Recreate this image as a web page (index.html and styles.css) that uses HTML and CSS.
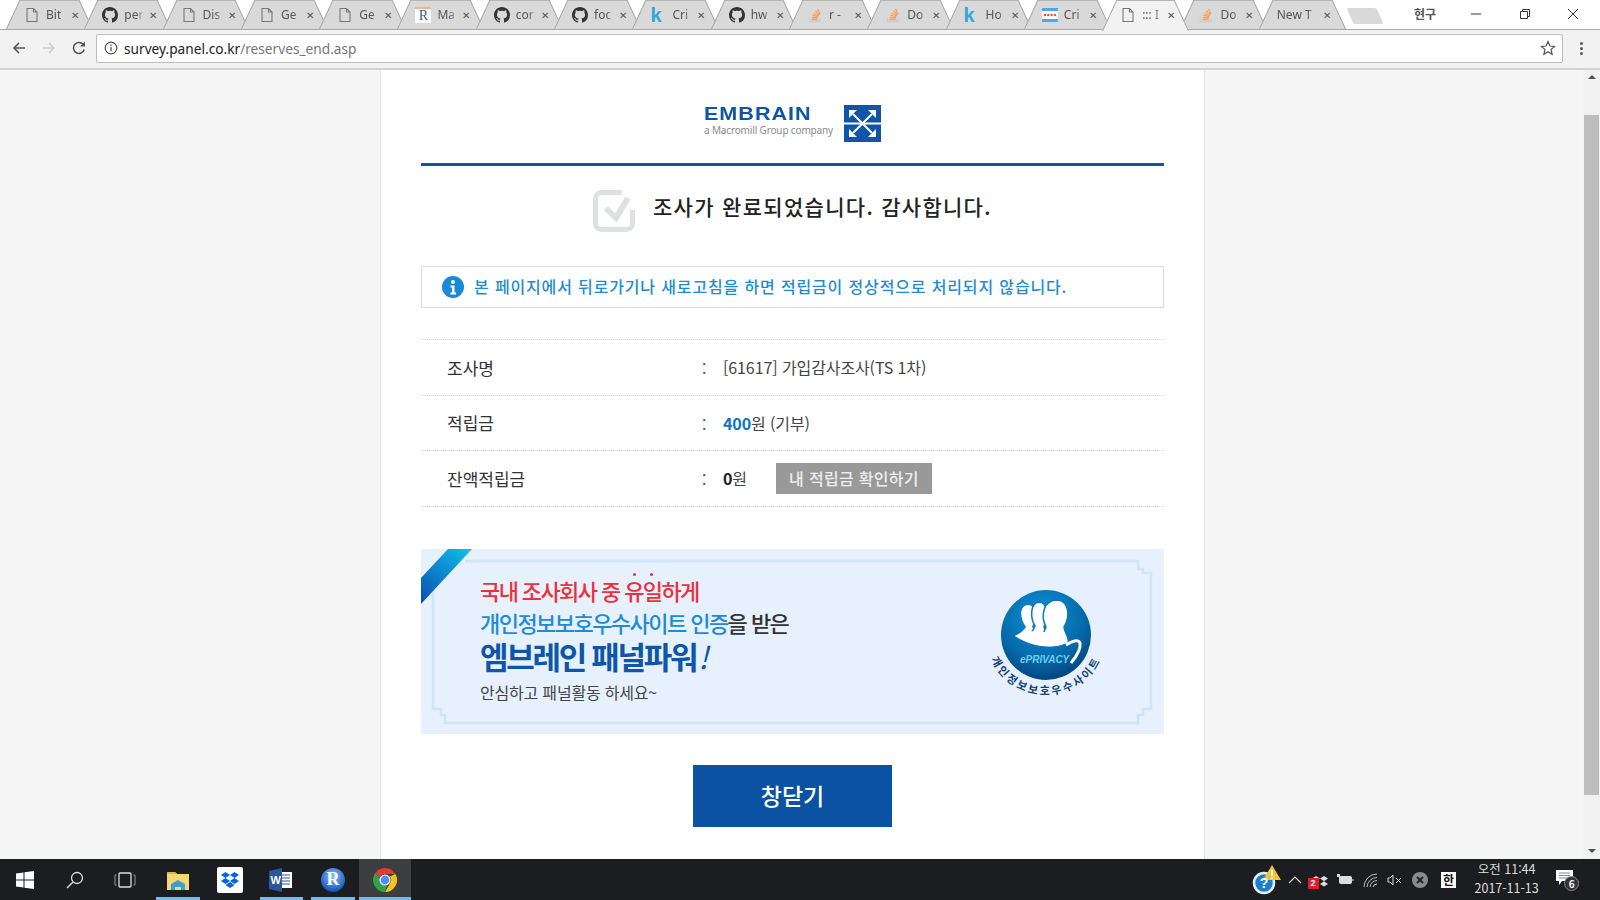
FILE: index.html
```html
<!DOCTYPE html>
<html lang="ko">
<head>
  <meta charset="UTF-8">
  <meta name="viewport" content="width=device-width, initial-scale=1.0">
  <title>Embrain survey complete</title>
  <link rel="stylesheet" href="styles.css">
</head>
<body>
  <svg class="icon-defs" width="0" height="0">
    <symbol id="i-file" viewBox="0 0 16 16">
      <path d="M3 1.5h6.5L13 5v9.5H3z M9.5 1.5V5H13" fill="none" stroke="#777" stroke-width="1.1"/>
    </symbol>
    <symbol id="i-github" viewBox="0 0 16 16">
      <path fill="#333" d="M8 0C3.58 0 0 3.58 0 8c0 3.54 2.29 6.53 5.47 7.59.4.07.55-.17.55-.38 0-.19-.01-.82-.01-1.49-2.01.37-2.53-.49-2.69-.94-.09-.23-.48-.94-.82-1.13-.28-.15-.68-.52-.01-.53.63-.01 1.08.58 1.23.82.72 1.21 1.87.87 2.33.66.07-.52.28-.87.51-1.07-1.78-.2-3.64-.89-3.64-3.95 0-.87.31-1.59.82-2.15-.08-.2-.36-1.02.08-2.12 0 0 .67-.21 2.2.82.64-.18 1.32-.27 2-.27s1.36.09 2 .27c1.53-1.04 2.2-.82 2.2-.82.44 1.1.16 1.92.08 2.12.51.56.82 1.27.82 2.15 0 3.07-1.87 3.75-3.65 3.95.29.25.54.73.54 1.48 0 1.07-.01 1.93-.01 2.2 0 .21.15.46.55.38A8 8 0 0 0 16 8c0-4.42-3.58-8-8-8z"/>
    </symbol>
    <symbol id="i-stack" viewBox="0 0 16 16">
      <path d="M2.5 11v3.5h10V11" fill="none" stroke="#ccc" stroke-width="1.4"/>
      <path d="M4.5 12.5h6M4.8 10.4l6 .6M5.4 8.2l5.8 1.6M6.6 6l5.2 3M8.4 3.8l4 4.4M10.6 2l2.4 5.2" fill="none" stroke="#f4a468" stroke-width="1.4"/>
    </symbol>
    <symbol id="i-cal" viewBox="0 0 16 16">
      <path fill="#4aa8ef" d="M0 1h16v3H0zM0 12h16v3H0z"/>
      <path fill="#fff" d="M0 4h16v8H0z"/>
      <circle cx="3" cy="8" r="1.2" fill="#d9534f"/><circle cx="6.3" cy="8" r="1.2" fill="#d9534f"/>
      <circle cx="9.6" cy="8" r="1.2" fill="#d9534f"/><circle cx="12.9" cy="8" r="1.2" fill="#d9534f"/>
    </symbol>
  </svg>

  <!-- Tab strip -->
  <div class="tab-strip">
    <div class="tab"><svg class="fav"><use href="#i-file"/></svg><span class="tab-title">Bit</span><span class="tab-x">&#10005;</span></div>
    <div class="tab"><svg class="fav"><use href="#i-github"/></svg><span class="tab-title">per</span><span class="tab-x">&#10005;</span></div>
    <div class="tab"><svg class="fav"><use href="#i-file"/></svg><span class="tab-title">Dis</span><span class="tab-x">&#10005;</span></div>
    <div class="tab"><svg class="fav"><use href="#i-file"/></svg><span class="tab-title">Ge</span><span class="tab-x">&#10005;</span></div>
    <div class="tab"><svg class="fav"><use href="#i-file"/></svg><span class="tab-title">Ge</span><span class="tab-x">&#10005;</span></div>
    <div class="tab"><span class="fav fav-r">R</span><span class="tab-title">Ma</span><span class="tab-x">&#10005;</span></div>
    <div class="tab"><svg class="fav"><use href="#i-github"/></svg><span class="tab-title">cor</span><span class="tab-x">&#10005;</span></div>
    <div class="tab"><svg class="fav"><use href="#i-github"/></svg><span class="tab-title">foc</span><span class="tab-x">&#10005;</span></div>
    <div class="tab"><span class="fav fav-k">k</span><span class="tab-title">Cri</span><span class="tab-x">&#10005;</span></div>
    <div class="tab"><svg class="fav"><use href="#i-github"/></svg><span class="tab-title">hw</span><span class="tab-x">&#10005;</span></div>
    <div class="tab"><svg class="fav"><use href="#i-stack"/></svg><span class="tab-title">r -</span><span class="tab-x">&#10005;</span></div>
    <div class="tab"><svg class="fav"><use href="#i-stack"/></svg><span class="tab-title">Do</span><span class="tab-x">&#10005;</span></div>
    <div class="tab"><span class="fav fav-k">k</span><span class="tab-title">Ho</span><span class="tab-x">&#10005;</span></div>
    <div class="tab"><svg class="fav"><use href="#i-cal"/></svg><span class="tab-title">Cri</span><span class="tab-x">&#10005;</span></div>
    <div class="tab active"><svg class="fav"><use href="#i-file"/></svg><span class="tab-title">::: I</span><span class="tab-x">&#10005;</span></div>
    <div class="tab"><svg class="fav"><use href="#i-stack"/></svg><span class="tab-title">Do</span><span class="tab-x">&#10005;</span></div>
    <div class="tab no-icon"><span class="tab-title">New T</span><span class="tab-x">&#10005;</span></div>
    <div class="new-tab"></div>
    <div class="profile-name">현구</div>
    <div class="window-controls">
      <svg width="12" height="12" viewBox="0 0 12 12"><path d="M1 6h10" stroke="#333" stroke-width="1"/></svg>
      <svg width="12" height="12" viewBox="0 0 12 12"><path d="M1.5 3.5h7v7h-7zM3.5 3.5v-2h7v7h-2" fill="none" stroke="#333"/></svg>
      <svg width="12" height="12" viewBox="0 0 12 12"><path d="M1 1l10 10M11 1L1 11" stroke="#333"/></svg>
    </div>
  </div>

  <!-- Toolbar -->
  <div class="toolbar">
    <svg class="nav-btn" viewBox="0 0 16 16"><path d="M14 8H3M8 3L3 8l5 5" fill="none" stroke="#555" stroke-width="1.6"/></svg>
    <svg class="nav-btn" viewBox="0 0 16 16"><path d="M2 8h11M8 3l5 5-5 5" fill="none" stroke="#ccc" stroke-width="1.6"/></svg>
    <svg class="nav-btn" viewBox="0 0 16 16"><path d="M13.2 9.6A5.5 5.5 0 1 1 12 4.2" fill="none" stroke="#555" stroke-width="1.6"/><path d="M14 1.5V6.5H9z" fill="#555"/></svg>
    <div class="omnibox">
      <svg class="omni-info" viewBox="0 0 14 14"><circle cx="7" cy="7" r="5.8" fill="none" stroke="#555" stroke-width="1.2"/><path d="M7 6v4.2M7 3.6v1.4" stroke="#555" stroke-width="1.3"/></svg>
      <span class="url"><b>survey.panel.co.kr</b>/reserves_end.asp</span>
      <svg class="omni-star" viewBox="0 0 16 16"><path d="M8 1.6l1.9 4.4 4.7.4-3.6 3.1 1.1 4.7L8 11.7l-4.1 2.5L5 9.5 1.4 6.4l4.7-.4z" fill="none" stroke="#555" stroke-width="1.2"/></svg>
    </div>
    <div class="menu-dots"><i></i><i></i><i></i></div>
  </div>

  <div class="viewport">
    <div class="page">
      <div class="sheet">
        <div class="logo-row">
          <div class="logo-text">
            <div class="logo-name">EMBRAIN</div>
            <div class="logo-sub">a Macromill Group company</div>
          </div>
          <svg class="logo-mark" viewBox="0 0 37 37">
            <rect width="37" height="37" fill="#0f55a8"/>
            <path d="M0 17.500h37v2H0z" fill="#fff"/>
            <path d="M18.500 18.500L9 9M18.500 18.500L28 9M18.500 18.500L9 28M18.500 18.500L28 28" stroke="#fff" stroke-width="2"/>
            <path d="M5 5h8l-8 8zM32 5H24l8 8zM5 32h8L5 24zM32 32H24l8-8z" fill="#fff"/>
          </svg>
        </div>

        <div class="done-title">
          <svg class="done-check" viewBox="0 0 42 42">
            <path d="M29 2.500H8.500a6 6 0 0 0-6 6V33.500a6 6 0 0 0 6 6H33.500a6 6 0 0 0 6-6V20" fill="none" stroke="#dfe1e1" stroke-width="5"/>
            <path d="M13 18l10 10L35 8" fill="none" stroke="#dfe1e1" stroke-width="6"/>
          </svg>
          <h1>조사가 완료되었습니다. 감사합니다.</h1>
        </div>

        <div class="notice">
          <svg class="notice-icon" viewBox="0 0 22 22">
            <circle cx="11" cy="11" r="11" fill="#1a8ad4"/>
            <circle cx="11" cy="6" r="2" fill="#fff"/>
            <path d="M8.500 9.500h4v7h1.500v2H8.500v-2H10v-5H8.500z" fill="#fff"/>
          </svg>
          <span class="notice-text">본 페이지에서 뒤로가기나 새로고침을 하면 적립금이 정상적으로 처리되지 않습니다.</span>
        </div>

        <div class="info-table">
          <div class="info-row">
            <div class="info-label">조사명</div><div class="info-colon">:</div>
            <div class="info-value">[61617] 가입감사조사(TS 1차)</div>
          </div>
          <div class="info-row">
            <div class="info-label">적립금</div><div class="info-colon">:</div>
            <div class="info-value"><b class="point">400</b>원 (기부)</div>
          </div>
          <div class="info-row">
            <div class="info-label">잔액적립금</div><div class="info-colon">:</div>
            <div class="info-value"><b>0</b>원<a class="my-point">내 적립금 확인하기</a></div>
          </div>
        </div>

        <div class="banner">
          <svg class="banner-frame" viewBox="0 0 742 185">
            <defs>
              <linearGradient id="ribbon" x1="0" y1="1" x2="1" y2="0">
                <stop offset="0" stop-color="#0a4fb0"/><stop offset="1" stop-color="#12c2ea"/>
              </linearGradient>
            </defs>
            <path d="M44 12H717V20H722V24H730V160H722V166H717V174H24V166H20V160H12V42" fill="none" stroke="#cfe3fa" stroke-width="2.500"/>
            <path d="M0 29L27 0H51L0 55z" fill="url(#ribbon)"/>
          </svg>
          <div class="banner-copy">
            <div class="copy-red">국내 조사회사 중 <span class="dots">유일</span>하게</div>
            <div class="copy-blue"><span>개인정보보호우수사이트 인증</span>을 받은</div>
            <div class="copy-big">엠브레인 패널파워<i>!</i></div>
            <div class="copy-small">안심하고 패널활동 하세요~</div>
          </div>
          <svg class="eprivacy" viewBox="0 0 120 120">
            <defs>
              <radialGradient id="seal" cx="0.45" cy="0.3" r="0.8">
                <stop offset="0" stop-color="#0d96da"/><stop offset="0.6" stop-color="#0668a8"/><stop offset="1" stop-color="#02376f"/>
              </radialGradient>
              <path id="seal-arc" d="M3.600 70.500A60 60 0 0 0 116.400 70.500"/>
            </defs>
            <circle cx="60" cy="50" r="45" fill="url(#seal)"/>
            <g fill="#fff">
              <path d="M29 51C34 49 38 45 40 42C34 34 33 22 41 20C49 19 51 30 46 42L60 60z"/>
              <path d="M38 56C44 50 47 46 49 41C44 33 44 18 53 17C62 17 62 32 58 42L66 62z" stroke="#0a78bd" stroke-width="1.500"/>
              <path d="M48 60C54 54 58 48 60 42C54 30 58 15 71 15C84 16 84 32 78 42C78 48 84 52 82 58C70 64 56 62 48 60z" stroke="#0a78bd" stroke-width="1.500"/>
              <path d="M29 51C42 60 66 66 82 57L60 47L40 46z"/>
            </g>
            <path d="M80 60C86 56 92 54 94 58C95 64 90 72 85 78" fill="none" stroke="#fff" stroke-width="3"/>
            <text class="seal-name" x="34" y="78">ePRIVACY</text>
            <text class="seal-arc-text"><textPath href="#seal-arc" startOffset="50%" text-anchor="middle">개인정보보호우수사이트</textPath></text>
          </svg>
        </div>

        <div class="close-wrap"><a class="close-btn">창닫기</a></div>
      </div>
    </div>
    <div class="scrollbar">
      <span class="arrow-up"></span>
      <span class="thumb"></span>
      <span class="arrow-down"></span>
    </div>
  </div>

  <!-- Windows taskbar -->
  <div class="taskbar">
    <div class="task-item small">
      <svg width="18" height="18" viewBox="0 0 18 18"><path fill="#fff" d="M0 2.500l7.500-1v7H0zM8.500 1.300L18 0v8.500H8.500zM0 9.500h7.500v7l-7.500-1zM8.500 9.500H18V18l-9.500-1.300z"/></svg>
    </div>
    <div class="task-item small">
      <svg width="18" height="18" viewBox="0 0 18 18"><circle cx="11" cy="7" r="5.500" fill="none" stroke="#ddd" stroke-width="1.300"/><path d="M7 11l-6 6" stroke="#ddd" stroke-width="1.500"/></svg>
    </div>
    <div class="task-item small">
      <svg width="22" height="16" viewBox="0 0 22 16"><rect x="5" y="1" width="12" height="14" rx="1" fill="none" stroke="#ddd" stroke-width="1.300"/><path d="M2.500 3H1v10h1.500M19.500 3H21v10h-1.500" fill="none" stroke="#999"/></svg>
    </div>
    <div class="task-item on first-app">
      <svg width="24" height="22" viewBox="0 0 24 22"><path d="M1 3h8l2 2h12v16H1z" fill="#f7d774"/><path d="M1 3h8l2 2H1z" fill="#e2b33c"/><path d="M5 21v-6l7-4 7 4v6h-4v-3H9v3z" fill="#3aa0dc"/></svg>
    </div>
    <div class="task-item">
      <div class="dropbox-tile">
        <svg width="18" height="16" viewBox="0 0 18 16"><path fill="#0a62e0" d="M4.500 0L9 3 4.500 6 0 3zM13.500 0L18 3l-4.500 3L9 3zM0 9l4.500-3L9 9l-4.500 3zM13.500 6L18 9l-4.500 3L9 9zM4.500 13L9 10l4.500 3L9 16z"/></svg>
      </div>
    </div>
    <div class="task-item on">
      <svg width="24" height="24" viewBox="0 0 24 24"><rect x="9" y="4" width="14" height="16" fill="#fff"/><path d="M12 7h9M12 10h9M12 13h9M12 16h9" stroke="#2b5797"/><path d="M0 3l13-3v24L0 21z" fill="#2b5797"/><text class="word-w" x="1.500" y="16">W</text></svg>
    </div>
    <div class="task-item on">
      <div class="r-ball">R</div>
    </div>
    <div class="task-item on current">
      <svg width="24" height="24" viewBox="0 0 24 24">
        <path d="M12 0a12 12 0 0 1 10.400 6H12a6 6 0 0 0-5.700 4L2.700 4.500A12 12 0 0 1 12 0z" fill="#e33b2e"/>
        <path d="M22.400 6A12 12 0 0 1 12 24l5.200-9A6 6 0 0 0 17 8.500z" fill="#fbc116"/>
        <path d="M12 24A12 12 0 0 1 2.700 4.500l5.300 9A6 6 0 0 0 14 17.700z" fill="#2fa148"/>
        <circle cx="12" cy="12" r="5" fill="#4f8df5" stroke="#fff" stroke-width="1.200"/>
      </svg>
    </div>
    <div class="tray">
      <div class="tray-help">
        <svg width="34" height="34" viewBox="0 0 34 34">
          <circle cx="13" cy="20" r="10" fill="#1d7fc9" stroke="#dff1fb" stroke-width="2.500"/>
          <path d="M21 2l9 15H12z" fill="#f4c23c"/><path d="M21 7v6M21 14.500v1.500" stroke="#fff" stroke-width="2"/>
        </svg>
        <span class="help-q">?</span>
      </div>
      <div class="tray-cell"><svg width="14" height="14" viewBox="0 0 14 14"><path d="M1 10l6-6 6 6" fill="none" stroke="#ddd" stroke-width="1.200"/></svg></div>
      <div class="tray-cell">
        <div class="tray-box">
          <svg width="16" height="16" viewBox="0 0 18 16"><path fill="#ddd" d="M4.500 0L9 3 4.500 6 0 3zM13.500 0L18 3l-4.500 3L9 3zM13.500 6L18 9l-4.500 3L9 9z"/></svg>
          <span class="tray-badge">2</span>
        </div>
      </div>
      <div class="tray-cell"><svg width="18" height="14" viewBox="0 0 18 14"><rect x="3.500" y="3.500" width="12" height="7" rx="1" fill="#ddd" stroke="#ddd"/><path d="M1 1h3v3H1z" fill="#ddd"/><path d="M17 6v2" stroke="#ddd"/></svg></div>
      <div class="tray-cell"><svg width="16" height="16" viewBox="0 0 16 16"><path d="M2 15a13 13 0 0 1 13-13M5 15A10 10 0 0 1 15 5.500M8 15a7 7 0 0 1 7-6.500" fill="none" stroke="#bbb"/><path d="M11 15a4 4 0 0 1 4-3" fill="none" stroke="#ddd"/></svg></div>
      <div class="tray-cell"><svg width="16" height="14" viewBox="0 0 16 14"><path d="M1 5h2l3-3v10L3 9H1z" fill="none" stroke="#ddd"/><path d="M9 5l5 5M14 5l-5 5" stroke="#ddd"/></svg></div>
      <div class="tray-cell"><svg width="16" height="16" viewBox="0 0 16 16"><circle cx="8" cy="8" r="8" fill="#8a8a8a"/><path d="M5 5l6 6M11 5l-6 6" stroke="#222" stroke-width="2"/></svg></div>
      <div class="ime-cell"><div class="ime">한</div></div>
      <div class="clock"><div>오전 11:44</div><div>2017-11-13</div></div>
      <div class="action-center">
        <svg width="18" height="16" viewBox="0 0 18 16"><path d="M0 0h17v11H6l-3 4v-4H0z" fill="#fff"/><path d="M3 3h11M3 5.500h11M3 8h11" stroke="#888"/></svg>
        <span class="action-count">6</span>
      </div>
    </div>
  </div>
</body>
</html>
```

FILE: styles.css
```css
* {
  box-sizing: border-box;
}

html, body {
  height: 100%;
}

body {
  margin: 0;
  height: 100vh;
  overflow: hidden;
  display: flex;
  flex-direction: column;
  background-color: #f5f5f5;
  color: #333;
  font-family: "Noto Sans CJK KR", "Noto Sans", sans-serif;
}

.icon-defs {
  position: absolute;
}

/* Tab strip */
.tab-strip {
  height: 30px;
  flex: none;
  display: flex;
  padding-left: 10px;
  background-color: #fff;
  border-bottom: 1px solid #a9a9a9;
  isolation: isolate;
}

.tab {
  width: 78.3px;
  height: 29px;
  flex: none;
  position: relative;
  display: flex;
  align-items: center;
  padding-left: 14px;
  font-family: "Noto Sans", sans-serif;
  font-size: 12px;
  color: #555;
}

.tab::before,
.tab::after {
  content: "";
  position: absolute;
  top: 0;
  bottom: 0;
  width: 62%;
  background-color: #d9d9d9;
  border-top: 1px solid #b5b5b5;
  z-index: -1;
}

.tab::before {
  left: -4px;
  border-left: 1px solid #a5a5a5;
  transform: skewX(-25deg);
  transform-origin: bottom left;
}

.tab::after {
  right: -4px;
  border-right: 1px solid #a5a5a5;
  transform: skewX(25deg);
  transform-origin: bottom right;
}

.tab.active {
  z-index: 2;
}

.tab.active::before,
.tab.active::after {
  height: 30px;
  background-color: #f2f2f2;
}

.fav {
  width: 16px;
  height: 16px;
  flex: none;
}

.fav-k {
  font-family: "Liberation Sans", sans-serif;
  font-size: 20px;
  font-weight: bold;
  line-height: 16px;
  color: #35a7d3;
}

.fav-r {
  background-color: #fff;
  border-top: 2px solid #f0b48c;
  font-family: "Liberation Serif", serif;
  font-size: 14px;
  line-height: 14px;
  text-align: center;
  color: #2c5f9e;
}

.tab-title {
  width: 20px;
  margin-left: 6px;
  flex: none;
  white-space: nowrap;
  overflow: hidden;
  -webkit-mask-image: linear-gradient(to right, #000 65%, transparent);
  mask-image: linear-gradient(to right, #000 65%, transparent);
}

.tab.no-icon .tab-title {
  width: 46px;
  margin-left: 0;
}

.tab-x {
  margin-left: 5px;
  font-size: 10px;
  color: #555;
}

.tab.no-icon .tab-x {
  margin-left: 0;
}

.new-tab {
  width: 30px;
  height: 16px;
  margin: 8px 0 0 9px;
  background-color: #d9d9d9;
  border-radius: 2px;
  transform: skewX(24deg);
}

.profile-name {
  margin: 5px 0 0 34px;
  font-size: 12px;
  font-weight: 700;
  color: #555;
}

.window-controls {
  margin: 8px 0 0 auto;
  width: 130px;
  height: 12px;
  padding-right: 21px;
  display: flex;
  justify-content: space-between;
}

/* Toolbar */
.toolbar {
  height: 40px;
  flex: none;
  display: flex;
  align-items: center;
  padding: 0 0 2px 11px;
  background-color: #f2f2f2;
  border-bottom: 2px solid #d2d2d2;
}

.nav-btn {
  width: 16px;
  height: 16px;
  margin-right: 14px;
  flex: none;
}

.omnibox {
  width: 1467px;
  height: 29px;
  margin-left: -5px;
  display: flex;
  align-items: center;
  padding: 0 6px 0 7px;
  background-color: #fff;
  border: 1px solid #bdbdbd;
  border-radius: 2px;
}

.omni-info {
  width: 14px;
  height: 14px;
  margin-right: 6px;
}

.url {
  flex: 1;
  font-family: "Noto Sans", sans-serif;
  font-size: 13.7px;
  color: #777;
}

.url b {
  font-weight: normal;
  color: #222;
}

.omni-star {
  width: 16px;
  height: 16px;
}

.menu-dots {
  margin-left: 17px;
  display: flex;
  flex-direction: column;
  gap: 2px;
}

.menu-dots i {
  width: 3px;
  height: 3px;
  background-color: #555;
  border-radius: 50%;
}

/* Page */
.viewport {
  flex: 1;
  min-height: 0;
  display: flex;
}

.page {
  flex: 1;
  min-width: 0;
  padding-left: 380px;
  overflow: hidden;
}

.sheet {
  width: 825px;
  height: 100%;
  padding: 0 40px;
  background-color: #fff;
  border-left: 1px solid #e4e4e4;
  border-right: 1px solid #e4e4e4;
}

.logo-row {
  height: 96px;
  padding: 35px 0 20px;
  display: flex;
  justify-content: center;
  gap: 10px;
  border-bottom: 3px solid #0f55a8;
}

.logo-text {
  width: 130px;
}

.logo-name {
  font-family: "Liberation Sans", sans-serif;
  font-size: 18px;
  font-weight: bold;
  line-height: 19px;
  letter-spacing: 0.8px;
  white-space: nowrap;
  color: #0f55a8;
  transform: scaleX(1.2);
  transform-origin: left;
}

.logo-sub {
  font-family: "Noto Sans", sans-serif;
  font-size: 10px;
  line-height: 12px;
  white-space: nowrap;
  letter-spacing: -0.15px;
  color: #8a8a8a;
}

.logo-mark {
  width: 37px;
  height: 37px;
}

.done-title {
  height: 100px;
  padding: 24px 0 0 172px;
  display: flex;
  gap: 18px;
}

.done-check {
  width: 42px;
  height: 42px;
  flex: none;
}

.done-title h1 {
  margin: 1px 0 0;
  font-size: 21px;
  font-weight: 500;
  line-height: 30px;
  letter-spacing: 1.3px;
  white-space: nowrap;
  color: #222;
}

.notice {
  height: 42px;
  display: flex;
  align-items: center;
  gap: 10px;
  padding-left: 20px;
  border: 1px solid #dcdcdc;
}

.notice-text {
  padding-bottom: 3px;
  font-size: 16px;
  font-weight: 500;
  letter-spacing: 0.85px;
  white-space: nowrap;
  color: #1e8ccf;
}

.notice-icon {
  width: 22px;
  height: 22px;
  flex: none;
}

.info-table {
  margin-top: 31px;
  border-bottom: 1px dotted #d5d5d5;
}

.info-row {
  height: 55.5px;
  display: grid;
  grid-template-columns: 255px 21px 1fr;
  align-items: center;
  padding-left: 26px;
  border-top: 1px dotted #d5d5d5;
  font-size: 16px;
}

.info-label {
  font-size: 17px;
  color: #333;
}

.info-colon {
  padding-top: 2px;
  color: #555;
}

.info-value {
  display: flex;
  align-items: center;
  letter-spacing: -0.1px;
  color: #444;
}

.info-value b {
  color: #222;
}

.info-value b.point {
  color: #0f74c8;
}

.my-point {
  margin-left: 29px;
  width: 156px;
  height: 31px;
  display: flex;
  align-items: center;
  justify-content: center;
  background-color: #999;
  font-size: 16px;
  font-weight: 500;
  letter-spacing: 0.3px;
  color: #eee;
}

.banner {
  position: relative;
  height: 185px;
  margin-top: 42px;
  padding: 25px 0 0 59px;
  background-color: #e6f1fd;
  overflow: hidden;
}

.banner-frame {
  position: absolute;
  top: 0;
  left: 0;
  width: 742px;
  height: 185px;
}

.banner-copy {
  position: relative;
  white-space: nowrap;
}

.copy-red {
  font-size: 22px;
  font-weight: 500;
  line-height: 32px;
  letter-spacing: -1.6px;
  color: #ec2f3a;
}

.dots {
  position: relative;
}

.dots::before {
  content: "";
  position: absolute;
  top: -1px;
  left: 9px;
  width: 3px;
  height: 3px;
  background-color: #ec2f3a;
  border-radius: 50%;
  box-shadow: 17px 0 0 #ec2f3a;
}

.copy-blue {
  font-size: 22px;
  font-weight: 500;
  line-height: 32px;
  letter-spacing: -1.55px;
  color: #333;
}

.copy-blue span {
  color: #1d8bd6;
}

.copy-big {
  font-size: 31px;
  font-weight: 700;
  line-height: 36px;
  letter-spacing: -2.3px;
  color: #0f56a8;
}

.copy-big i {
  margin-left: 2px;
  font-weight: 400;
}

.copy-small {
  margin-top: 6px;
  font-size: 16px;
  line-height: 24px;
  letter-spacing: -0.2px;
  color: #444;
}

.eprivacy {
  position: absolute;
  top: 36px;
  left: 565px;
  width: 120px;
  height: 120px;
}

.seal-name {
  font-family: "Liberation Sans", sans-serif;
  font-size: 10px;
  font-weight: bold;
  font-style: italic;
  fill: #6fcdf2;
}

.seal-arc-text {
  font-size: 11px;
  font-weight: 700;
  letter-spacing: 2.5px;
  fill: #123f78;
}

.close-wrap {
  margin-top: 31px;
  display: flex;
  justify-content: center;
}

.close-btn {
  width: 199px;
  height: 62px;
  padding-bottom: 2px;
  display: flex;
  align-items: center;
  justify-content: center;
  background-color: #0c52a3;
  font-size: 23px;
  font-weight: 500;
  color: #fff;
}

/* Scrollbar */
.scrollbar {
  width: 17px;
  flex: none;
  position: relative;
  display: flex;
  flex-direction: column;
  align-items: center;
  background-color: #f1f1f1;
}

.thumb {
  width: 15px;
  height: 680px;
  margin-top: 36px;
  background-color: #bdbdbd;
}

.arrow-up,
.arrow-down {
  width: 0;
  height: 0;
  border-left: 4px solid transparent;
  border-right: 4px solid transparent;
}

.arrow-up {
  margin-top: 5px;
  border-bottom: 4px solid #505050;
}

.arrow-down {
  margin-top: auto;
  margin-bottom: 6px;
  border-top: 4px solid #505050;
}

/* Taskbar */
.taskbar {
  height: 41px;
  flex: none;
  display: flex;
  align-items: center;
  background-color: #1b1d20;
}

.task-item {
  width: 51.7px;
  height: 41px;
  flex: none;
  display: flex;
  align-items: center;
  justify-content: center;
  position: relative;
}

.task-item.small {
  width: 50px;
}

.task-item.first-app {
  margin-left: 2.2px;
}

.task-item.on::after {
  content: "";
  position: absolute;
  left: 4px;
  right: 4px;
  bottom: 0;
  height: 3px;
  background-color: #76b9ed;
}

.task-item.current {
  background-color: #3c3e40;
}

.task-item.current::after {
  left: 0;
  right: 0;
}

.dropbox-tile {
  width: 26px;
  height: 26px;
  display: flex;
  align-items: center;
  justify-content: center;
  background-color: #fff;
  border-radius: 2px;
}

.word-w {
  font-family: "Liberation Sans", sans-serif;
  font-size: 11px;
  font-weight: bold;
  fill: #fff;
}

.r-ball {
  width: 24px;
  height: 24px;
  display: flex;
  align-items: center;
  justify-content: center;
  background: radial-gradient(circle at 50% 35%, #8fc4f2, #1c5cc4 70%, #0c2f80);
  border-radius: 50%;
  font-family: "Liberation Serif", serif;
  font-size: 18px;
  font-weight: bold;
  color: #fff;
}

.tray {
  flex: 1;
  height: 41px;
  padding-left: 840px;
  display: flex;
  align-items: center;
}

.tray-help {
  width: 31.5px;
  height: 34px;
  position: relative;
  flex: none;
}

.help-q {
  position: absolute;
  top: 12px;
  left: 9px;
  font-family: "Liberation Sans", sans-serif;
  font-size: 14px;
  font-weight: bold;
  color: #fff;
}

.tray-cell {
  width: 25px;
  flex: none;
  display: flex;
  justify-content: center;
}

.tray-box {
  width: 16px;
  height: 16px;
  position: relative;
}

.tray-badge {
  position: absolute;
  left: -4px;
  top: 6px;
  width: 11px;
  height: 11px;
  background-color: #e01c27;
  font-family: "Liberation Sans", sans-serif;
  font-size: 9px;
  font-weight: bold;
  line-height: 11px;
  text-align: center;
  color: #fff;
}

.ime-cell {
  width: 33px;
  flex: none;
  display: flex;
  justify-content: center;
}

.ime {
  width: 15px;
  height: 16px;
  background-color: #fff;
  font-size: 12px;
  font-weight: 700;
  line-height: 16px;
  text-align: center;
  color: #111;
}

.clock {
  width: 83px;
  margin-bottom: 3px;
  flex: none;
  font-size: 12.5px;
  line-height: 19px;
  text-align: center;
  color: #ddd;
}

.action-center {
  width: 32px;
  height: 26px;
  margin-left: 8px;
  position: relative;
  flex: none;
}

.action-count {
  position: absolute;
  left: 8px;
  top: 9px;
  width: 15px;
  height: 15px;
  background-color: #333;
  border: 1px solid #888;
  border-radius: 50%;
  font-size: 10px;
  font-weight: 700;
  line-height: 13px;
  text-align: center;
  color: #fff;
}
```
